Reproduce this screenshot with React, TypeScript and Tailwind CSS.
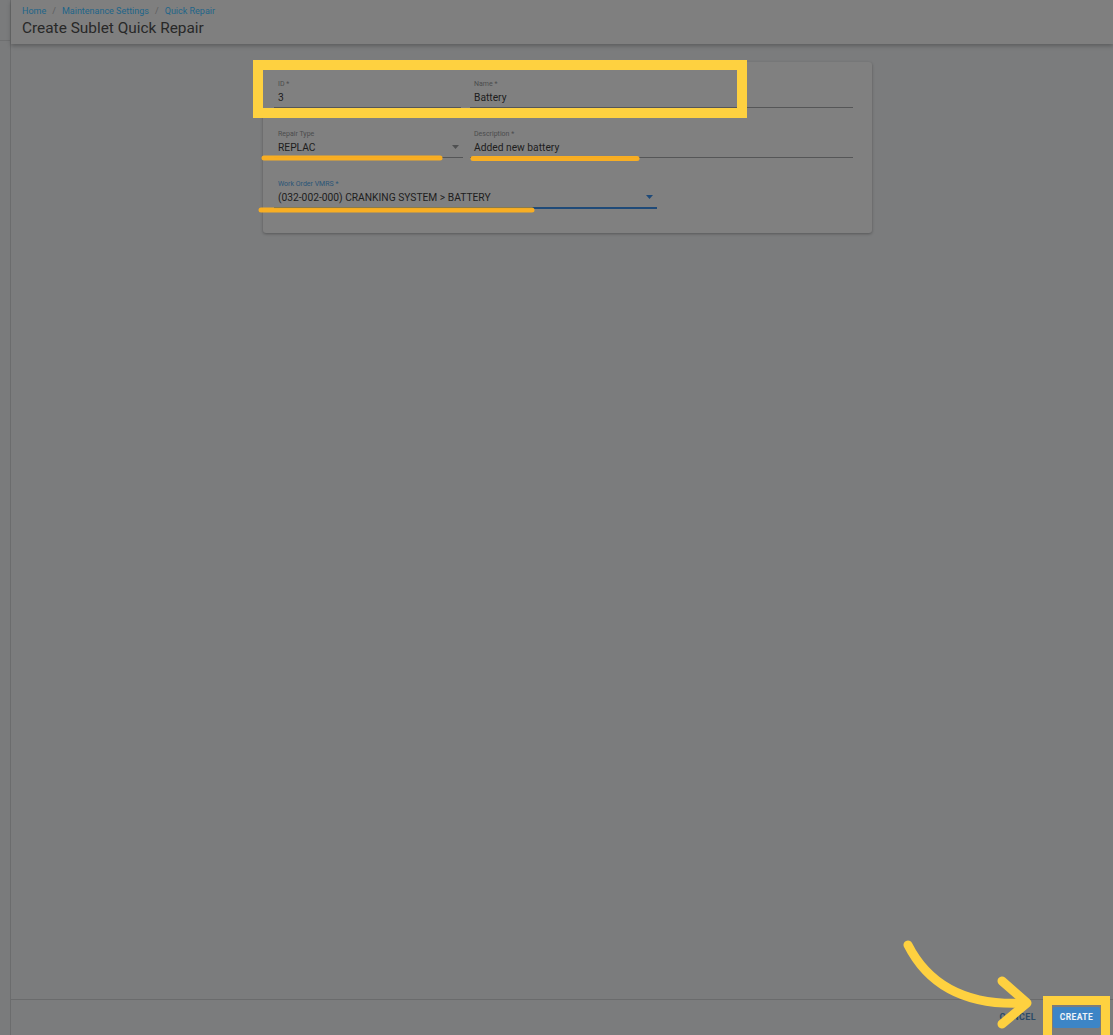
import React from 'react';

const font = { fontFamily: 'Roboto, "Liberation Sans", sans-serif' };

type FieldProps = {
  label: string;
  value: string;
  width: string;
  select?: boolean;
  focused?: boolean;
};

const Field: React.FC<FieldProps> = ({ label, value, width, select, focused }) => (
  <div
    className={`${width} relative flex flex-col justify-end ${
      focused ? 'h-[30px] border-b-2 border-[#1f4a78]' : 'h-[29px] border-b border-[#555657]'
    }`}
  >
    <span
      className={`pl-[4px] text-[7px] leading-[9px] ${focused ? 'text-[#2a5577]' : 'text-[#4b4c4d]'}`}
    >
      {label}
    </span>
    <span className="pl-[4px] pb-[2px] pt-[2px] text-[10.25px] leading-[14px] text-[#1d1d1d]">{value}</span>
    {select && (
      <svg
        className="absolute right-[4px] bottom-[8px]"
        width="7"
        height="4"
        viewBox="0 0 7 4"
      >
        <path d="M0 0 L7 0 L3.5 4 Z" fill={focused ? '#1f4a78' : '#4f5051'} />
      </svg>
    )}
  </div>
);

const Annotations: React.FC = () => (
  <svg
    className="pointer-events-none absolute left-0 top-0"
    width="1113"
    height="1035"
    viewBox="0 0 1113 1035"
  >
    <rect x="258" y="65" width="484" height="48" fill="none" stroke="#fed140" strokeWidth="10" />
    <rect x="1047.5" y="1000.5" width="58" height="40" fill="none" stroke="#fed140" strokeWidth="9" />
    <g stroke="#ffb11f" strokeWidth="5" strokeLinecap="round" opacity="0.95">
      <line x1="264" y1="158" x2="440" y2="158" />
      <line x1="473" y1="158.5" x2="637" y2="158.5" />
      <line x1="261" y1="210" x2="532" y2="210" />
    </g>
    <g stroke="#fed140" strokeWidth="9" strokeLinecap="round" strokeLinejoin="round" fill="none">
      <path d="M908 945 Q940 1008 1026 1003" />
      <path d="M1002 981 L1027 1003 L1002 1024" />
    </g>
  </svg>
);

export default function App() {
  return (
    <div className="relative flex h-[1035px] w-full overflow-hidden bg-[#7b7c7d]" style={font}>
      <div className="flex w-[11px] shrink-0 flex-col border-r border-[#6b6c6d] bg-[#7a7b7c]">
        <div className="h-[41px] border-b border-[#6e6f70]" />
      </div>

      <div className="flex min-w-0 flex-1 flex-col">
        <header className="relative z-10 flex h-[44px] shrink-0 flex-col bg-[#7f7f7f] pl-[11px] pt-[5px] shadow-[0_2px_4px_rgba(0,0,0,0.25)]">
          <nav className="flex items-center gap-[6px] text-[9px] leading-[12px] text-[#1e6589]">
            <span>Home</span>
            <span className="text-[#5c5d5e]">/</span>
            <span>Maintenance Settings</span>
            <span className="text-[#5c5d5e]">/</span>
            <span>Quick Repair</span>
          </nav>
          <h1 className="pt-[1px] text-[15.4px] leading-[20px] text-[#282828]">Create Sublet Quick Repair</h1>
        </header>

        <main className="flex-1 pt-[18px]">
          <div className="ml-[252px] flex w-[609px] flex-col gap-[21px] rounded-[3px] bg-[#808080] pb-[24px] pl-[11px] pt-[17px] shadow-[0_1px_3px_rgba(0,0,0,0.3)]">
            <div className="flex gap-[9px]">
              <Field label="ID *" value="3" width="w-[187px]" />
              <Field label="Name *" value="Battery" width="w-[383px]" />
            </div>
            <div className="flex gap-[7px]">
              <Field label="Repair Type" value="REPLAC" width="w-[189px]" select />
              <Field label="Description *" value="Added new battery" width="w-[383px]" />
            </div>
            <div className="flex">
              <Field
                label="Work Order VMRS *"
                value="(032-002-000) CRANKING SYSTEM > BATTERY"
                width="w-[383px]"
                select
                focused
              />
            </div>
          </div>
        </main>

        <footer className="flex h-[36px] shrink-0 items-center justify-end gap-[13px] border-t border-[#6a6b6c] pr-[13px]">
          <button className="px-[4px] text-[9px] font-bold tracking-[0.4px] text-[#2b4a66]">CANCEL</button>
          <button className="flex h-[21px] w-[47px] items-center justify-center rounded-[2px] bg-[#3d85c6] text-[8.5px] font-bold tracking-[0.4px] text-[#eef3f8]">
            CREATE
          </button>
        </footer>
      </div>

      <Annotations />
    </div>
  );
}
